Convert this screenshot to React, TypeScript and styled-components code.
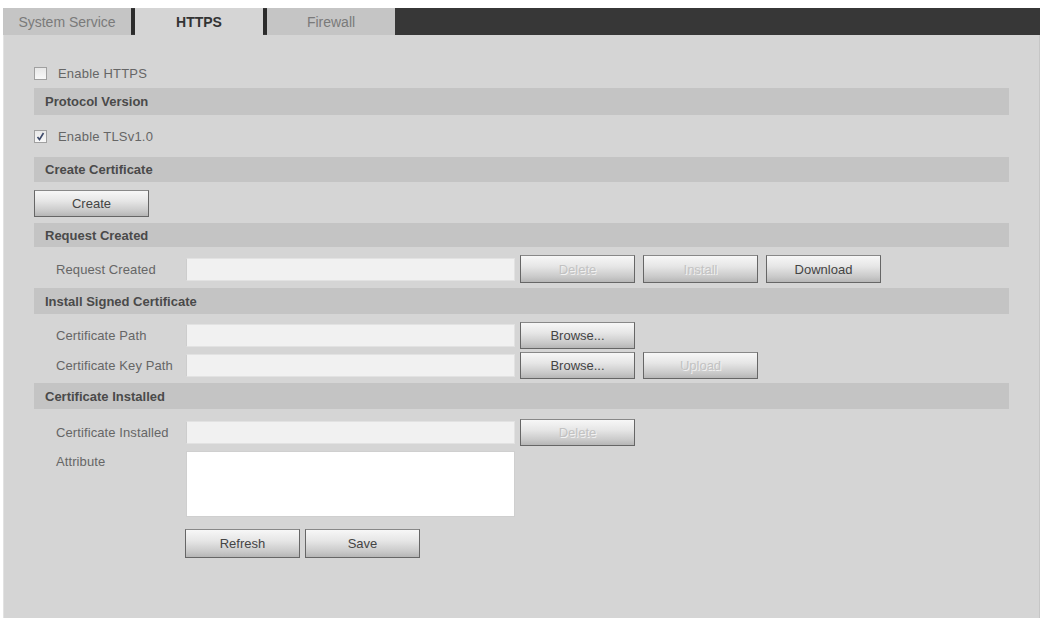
import React from 'react';
import styled, { createGlobalStyle } from 'styled-components';

const GlobalStyle = createGlobalStyle`
  html, body {
    margin: 0;
    padding: 0;
    background: #ffffff;
  }
  body {
    font-family: 'Liberation Sans', Arial, sans-serif;
    font-size: 13px;
    color: #555;
  }
`;

const Page = styled.div`
  padding: 8px 2px 0 3px;
  height: 610px;
  display: flex;
  flex-direction: column;
`;

const TabBar = styled.div`
  display: flex;
  height: 27px;
  background: #373737;
`;

const Tab = styled.div<{ active?: boolean }>`
  width: 128px;
  display: flex;
  align-items: center;
  justify-content: center;
  font-size: 14px;
  background: ${(p) => (p.active ? '#d5d5d5' : '#c5c5c5')};
  color: ${(p) => (p.active ? '#333' : '#7a7a7a')};
  font-weight: ${(p) => (p.active ? 'bold' : 'normal')};
`;

const TabDivider = styled.div`
  width: 4px;
  background: #2c2c2c;
  margin: 1px 0;
`;

const Panel = styled.div`
  flex: 1;
  background: #d5d5d5;
  padding: 25px 30px 0 30px;
  border-left: 1px solid #e2e2e2;
  border-right: 1px solid #c6c6c6;
`;

const CheckRow = styled.label<{ top?: number }>`
  display: flex;
  align-items: center;
  height: 26px;
  margin-top: ${(p) => p.top ?? 0}px;
  color: #666;
  letter-spacing: 0.2px;
`;

const Box = styled.span`
  width: 11px;
  height: 11px;
  border: 1px solid #a0a0a0;
  background: linear-gradient(#e8e8e8, #f8f8f8);
  margin-right: 11px;
  display: flex;
  align-items: center;
  justify-content: center;
`;

const SectionHeader = styled.div<{ top: number; h: number }>`
  height: ${(p) => p.h}px;
  margin-top: ${(p) => p.top}px;
  background: #c4c4c4;
  display: flex;
  align-items: center;
  padding-left: 11px;
  font-weight: bold;
  color: #4a4a4a;
`;

const Row = styled.div<{ top: number; h?: number }>`
  display: flex;
  align-items: center;
  height: ${(p) => p.h ?? 28}px;
  margin-top: ${(p) => p.top}px;
`;

const FieldLabel = styled.div<{ alignTop?: boolean }>`
  width: 130px;
  padding-left: 22px;
  align-self: ${(p) => (p.alignTop ? 'flex-start' : 'center')};
  padding-top: ${(p) => (p.alignTop ? 3 : 0)}px;
  color: #666;
  letter-spacing: 0.1px;
  white-space: nowrap;
`;

const TextField = styled.div`
  width: 327px;
  height: 21px;
  background: #f1f1f1;
  border: 1px solid #e2e2e2;
  border-left-color: #cdcdcd;
  margin-right: 5px;
`;

const TextArea = styled.div`
  width: 327px;
  height: 64px;
  background: #ffffff;
  border: 1px solid #cfcfcf;
  align-self: flex-start;
`;

const Button = styled.button<{ disabled?: boolean; h?: number; gap?: number }>`
  width: 115px;
  height: ${(p) => p.h ?? 27}px;
  margin-right: ${(p) => p.gap ?? 8}px;
  padding: 0;
  border: 1px solid #666;
  border-top-color: #888;
  border-radius: 0;
  background: linear-gradient(#f7f7f7 0%, #e6e6e6 40%, #c9c9c9 80%, #b6b6b6 100%);
  font-family: 'Liberation Sans', Arial, sans-serif;
  font-size: 13px;
  color: ${(p) => (p.disabled ? '#c2c2c2' : '#444')};
  text-shadow: ${(p) => (p.disabled ? '1px 1px 0 #f2f2f2' : 'none')};
  flex-shrink: 0;
`;

const Indent = styled.div`
  width: 151px;
  flex-shrink: 0;
`;

const Check = () => (
  <svg width="9" height="9" viewBox="0 0 9 9">
    <path d="M1.5 5 L3.5 7.5 L7.5 1" fill="none" stroke="#3d4a6a" strokeWidth="1.6" />
  </svg>
);

const App: React.FC = () => (
  <>
    <GlobalStyle />
    <Page>
      <TabBar>
        <Tab>System Service</Tab>
        <TabDivider />
        <Tab active>HTTPS</Tab>
        <TabDivider />
        <Tab>Firewall</Tab>
      </TabBar>
      <Panel>
        <CheckRow>
          <Box />
          Enable HTTPS
        </CheckRow>
        <SectionHeader top={2} h={27}>Protocol Version</SectionHeader>
        <CheckRow top={8}>
          <Box>
            <Check />
          </Box>
          Enable TLSv1.0
        </CheckRow>
        <SectionHeader top={8} h={25}>Create Certificate</SectionHeader>
        <Row top={8} h={27}>
          <Button>Create</Button>
        </Row>
        <SectionHeader top={6} h={24}>Request Created</SectionHeader>
        <Row top={8}>
          <FieldLabel>Request Created</FieldLabel>
          <TextField />
          <Button disabled h={28}>Delete</Button>
          <Button disabled h={28}>Install</Button>
          <Button h={28}>Download</Button>
        </Row>
        <SectionHeader top={5} h={26}>Install Signed Certificate</SectionHeader>
        <Row top={7}>
          <FieldLabel>Certificate Path</FieldLabel>
          <TextField />
          <Button>Browse...</Button>
        </Row>
        <Row top={2}>
          <FieldLabel>Certificate Key Path</FieldLabel>
          <TextField />
          <Button>Browse...</Button>
          <Button disabled>Upload</Button>
        </Row>
        <SectionHeader top={4} h={26}>Certificate Installed</SectionHeader>
        <Row top={9}>
          <FieldLabel>Certificate Installed</FieldLabel>
          <TextField />
          <Button disabled>Delete</Button>
        </Row>
        <Row top={5} h={66}>
          <FieldLabel alignTop>Attribute</FieldLabel>
          <TextArea />
        </Row>
        <Row top={12} h={29}>
          <Indent />
          <Button h={29} gap={5}>Refresh</Button>
          <Button h={29}>Save</Button>
        </Row>
      </Panel>
    </Page>
  </>
);

export default App;
